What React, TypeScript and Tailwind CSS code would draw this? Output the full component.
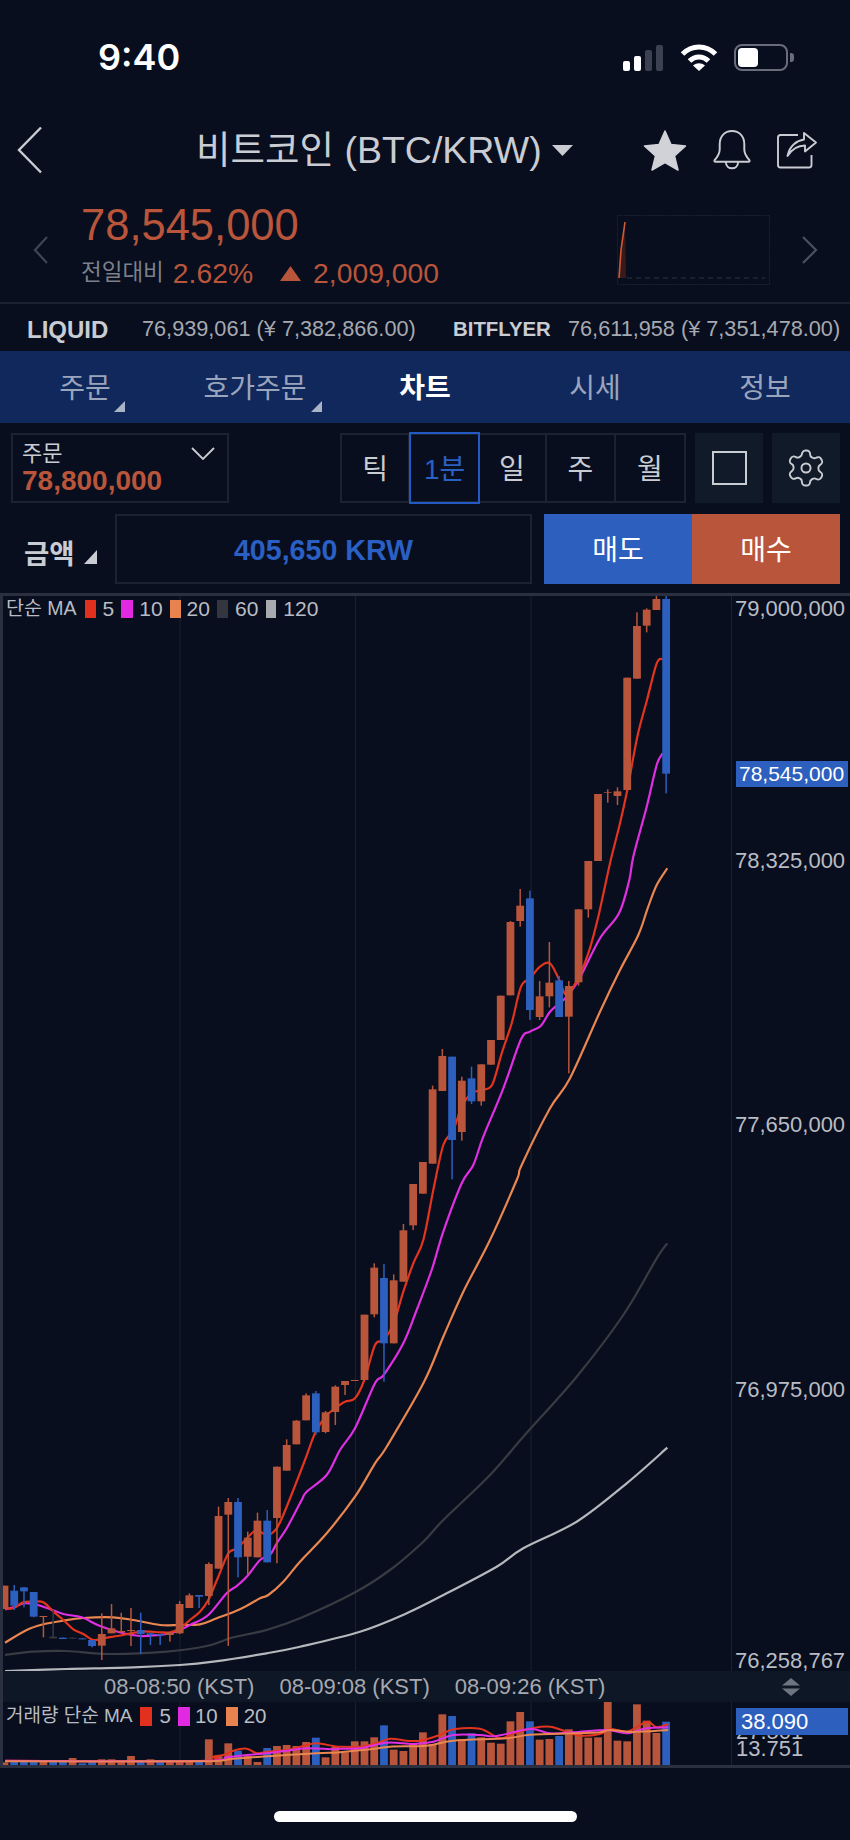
import React from "react";

type Candle = [number, number, number, number, "o" | "b" | "d"];

// candle values are read off the chart: [bodyTop, bodyBottom, wickTop, wickBottom, colour]
const rawA: Candle[] = [
  [617, 687, 617, 687, "o"], [632, 677, 615, 690, "b"], [622, 634, 622, 682, "b"], [636, 710, 636, 712, "b"],
  [708, 711, 708, 772, "o"], [770, 775, 690, 775, "d"], [773, 777, 773, 777, "b"], [773, 776, 773, 776, "d"],
  [775, 778, 775, 778, "b"], [780, 798, 780, 802, "b"], [762, 797, 700, 840, "o"], [745, 760, 672, 760, "o"],
  [753, 757, 698, 757, "o"], [750, 753, 684, 798, "o"], [750, 762, 698, 822, "b"], [760, 765, 760, 795, "b"],
  [762, 766, 762, 795, "b"], [757, 765, 757, 785, "o"], [672, 760, 663, 762, "o"], [646, 684, 640, 684, "o"],
  [645, 650, 645, 684, "b"], [552, 648, 547, 675, "o"], [408, 566, 380, 566, "o"], [366, 404, 354, 798, "o"],
  [366, 532, 354, 592, "b"], [473, 530, 455, 585, "o"], [422, 532, 398, 532, "o"], [422, 547, 390, 547, "b"],
  [260, 414, 260, 550, "o"], [195, 272, 178, 272, "o"], [122, 193, 120, 193, "o"],
];
const rawB: Candle[] = [
  [886, 961, 880, 961, "o"], [880, 997, 873, 1005, "b"], [937, 996, 933, 1000, "o"], [860, 936, 856, 975, "o"],
  [843, 855, 843, 885, "o"], [840, 843, 840, 843, "o"], [644, 840, 644, 840, "o"], [503, 643, 490, 652, "o"],
  [534, 730, 492, 845, "b"], [541, 730, 523, 730, "o"], [391, 545, 372, 545, "o"], [252, 376, 252, 390, "o"],
  [186, 281, 186, 281, "o"],
];
const rawC: Candle[] = [
  [628, 851, 617, 851, "o"], [528, 633, 507, 633, "o"], [530, 780, 530, 898, "b"], [602, 756, 590, 782, "o"],
  [595, 664, 560, 672, "b"], [553, 664, 553, 677, "o"], [480, 554, 480, 554, "o"], [347, 480, 347, 480, "o"],
  [126, 346, 123, 346, "o"], [77, 123, 27, 140, "o"], [55, 390, 32, 420, "b"], [349, 411, 303, 420, "o"],
  [308, 349, 186, 382, "o"], [301, 411, 288, 411, "b"], [318, 410, 303, 580, "o"], [88, 307, 88, 317, "o"],
];
const rawD: Candle[] = [
  [813, 958, 813, 983, "o"], [612, 813, 612, 813, "o"], [606, 608, 598, 638, "o"], [604, 618, 592, 645, "o"],
  [263, 600, 263, 600, "o"], [108, 266, 67, 266, "o"], [59, 107, 55, 127, "o"], [27, 60, 15, 60, "o"],
  [27, 551, 15, 610, "b"],
];

const toPage = (list: Candle[], oy: number): Candle[] =>
  list.map(([a, b, c, d, k]) => [oy + a / 3, oy + b / 3, oy + c / 3, oy + d / 3, k]);

const candles: Candle[] = [
  ...toPage(rawA, 1380),
  ...toPage(rawB, 1100),
  ...toPage(rawC, 880),
  ...toPage(rawD, 590),
];

const candleX = (i: number) => 4.5 + 9.73 * i;

const pts = (ox: number, oy: number, list: number[][]) => list.map(([x, y]) => [ox + x / 3, oy + y / 3]);

// catmull-rom through the read points, the app's lines are smooth
const smooth = (p: number[][]) => {
  let d = `M${p[0][0].toFixed(1)} ${p[0][1].toFixed(1)}`;
  for (let i = 0; i < p.length - 1; i++) {
    const a = p[Math.max(i - 1, 0)];
    const b = p[i];
    const c = p[i + 1];
    const e = p[Math.min(i + 2, p.length - 1)];
    const c1x = b[0] + (c[0] - a[0]) / 6;
    const c1y = b[1] + (c[1] - a[1]) / 6;
    const c2x = c[0] - (e[0] - b[0]) / 6;
    const c2y = c[1] - (e[1] - b[1]) / 6;
    d += ` C${c1x.toFixed(1)} ${c1y.toFixed(1)} ${c2x.toFixed(1)} ${c2y.toFixed(1)} ${c[0].toFixed(1)} ${c[1].toFixed(1)}`;
  }
  return d;
};

const ma5 = smooth([
  ...pts(0, 1380, [[15, 685], [40, 685], [70, 667], [100, 665], [130, 667], [160, 695], [190, 720], [220, 748], [250, 762], [280, 780], [310, 775], [340, 770], [370, 765], [420, 755], [450, 755], [480, 757], [510, 757], [540, 745], [570, 720], [600, 695], [625, 660], [655, 590], [685, 520], [712, 505], [745, 470], [770, 450], [800, 465], [830, 445], [860, 380]]),
  ...pts(240, 1100, [[195, 1080], [225, 1000], [256, 950], [285, 925], [315, 905], [345, 895], [373, 840], [405, 735], [431, 720], [461, 670], [490, 575], [520, 490], [550, 420], [580, 270], [610, 135], [640, 90]]),
  ...pts(420, 880, [[125, 680], [154, 640], [184, 630], [216, 615], [245, 520], [275, 430], [303, 320], [330, 295], [360, 260], [390, 250], [418, 300], [440, 345], [476, 290], [505, 220], [535, 110]]),
  ...pts(540, 590, [[210, 820], [240, 700], [262, 600], [292, 440], [321, 330], [350, 220], [368, 207]]),
]);

const ma10 = smooth([
  ...pts(0, 1380, [[15, 688], [40, 682], [70, 670], [100, 672], [130, 680], [190, 702], [245, 712], [300, 738], [370, 760], [420, 768], [480, 765], [510, 760], [540, 750], [570, 735], [625, 705], [680, 640], [712, 617], [745, 585], [780, 540], [810, 525], [830, 490], [860, 445]]),
  ...pts(240, 1100, [[185, 1200], [200, 1175], [260, 1125], [300, 1050], [345, 985], [405, 850], [431, 825], [490, 730], [530, 630], [575, 510], [610, 395], [665, 250], [700, 195]]),
  ...pts(420, 880, [[190, 770], [250, 625], [303, 478], [330, 455], [362, 438], [390, 395], [418, 370], [440, 350], [476, 300], [540, 175], [597, 100], [628, 0]]),
  ...pts(540, 590, [[280, 800], [320, 650], [350, 525], [368, 490]]),
]);

const ma20 = smooth([
  ...pts(0, 1380, [[15, 788], [80, 750], [130, 733], [190, 722], [250, 714], [340, 712], [400, 720], [480, 735], [540, 735], [600, 733], [650, 715], [720, 688], [780, 655], [805, 645], [850, 605]]),
  ...pts(300, 1230, [[0, 995], [80, 910], [165, 800]]),
  ...pts(240, 1100, [[405, 1090], [440, 1040], [550, 850], [610, 710], [670, 575], [750, 420]]),
  ...pts(420, 880, [[290, 900], [305, 855], [390, 685], [450, 595], [540, 395], [600, 270], [655, 165]]),
  ...pts(540, 590, [[322, 958], [350, 885], [382, 835]]),
]);

const ma60 = smooth([
  ...pts(0, 1380, [[15, 825], [100, 815], [200, 813], [330, 822], [500, 815], [620, 798], [700, 772], [800, 750]]),
  ...pts(300, 1230, [[0, 1165], [160, 1090], [270, 1020], [370, 935], [430, 870], [570, 735], [670, 620], [830, 440], [970, 255], [1070, 85], [1102, 40]]),
]);

const ma120 = smooth([
  ...pts(0, 1380, [[15, 873], [200, 867], [400, 862], [540, 855], [640, 845], [800, 820]]),
  ...pts(300, 1230, [[0, 1250], [180, 1205], [320, 1150], [440, 1090], [590, 1010], [670, 955], [830, 875], [980, 760], [1102, 653]]),
]);

// volume bars: top of each bar as read from the two crops
const volTops: [number, "o" | "b"][] = [
  [187, "o"], [183, "b"], [183, "b"], [183, "b"], [186, "o"], [185, "b"], [184, "b"], [174, "o"], [190, "b"], [185, "b"],
  [178, "o"], [178, "o"], [182, "o"], [168, "o"], [180, "b"], [178, "o"], [184, "b"], [183, "o"], [184, "o"], [184, "o"],
  [183, "b"], [118, "o"], [166, "o"], [130, "o"], [152, "b"], [168, "o"], [186, "o"], [144, "b"], [138, "o"], [135, "o"],
  [138, "o"], [126, "o"], [113, "b"], [172, "o"], [140, "o"], [157, "o"], [124, "o"], [124, "o"], [112, "o"], [76, "b"],
  [149, "o"], [153, "o"], [130, "o"], [97, "o"], [132, "o"], [43, "o"], [48, "b"], [118, "o"], [100, "b"], [112, "o"],
  [128, "o"], [131, "o"], [64, "o"], [36, "o"], [64, "b"], [119, "o"], [117, "o"], [108, "b"], [88, "o"], [100, "o"],
  [113, "o"], [112, "o"], [5, "o"], [122, "o"], [124, "o"], [13, "o"], [62, "o"], [99, "o"], [65, "b"],
];

const vol5 = smooth([
  ...pts(0, 1700, [[15, 182], [600, 183], [640, 170], [670, 165], [700, 152], [740, 146], [770, 160], [800, 155], [860, 150], [920, 135], [950, 130], [1000, 138]]),
  ...pts(340, 1700, [[0, 140], [60, 140], [110, 130], [150, 116], [200, 122], [240, 122], [300, 105], [340, 88], [420, 86], [480, 115], [520, 100], [580, 84], [630, 80], [680, 95], [720, 107], [780, 102], [810, 87], [860, 95], [900, 75], [925, 65], [950, 82], [985, 72]]),
]);
const vol10 = smooth([
  ...pts(0, 1700, [[15, 182], [600, 183], [680, 172], [740, 165], [800, 160], [860, 152], [920, 145], [1000, 148]]),
  ...pts(340, 1700, [[0, 146], [60, 145], [140, 128], [220, 132], [280, 125], [340, 105], [420, 105], [470, 108], [570, 87], [630, 100], [700, 97], [800, 90], [860, 100], [920, 85], [985, 82]]),
]);
const vol20 = smooth([
  ...pts(0, 1700, [[15, 184], [600, 184], [700, 176], [860, 165], [1000, 158]]),
  ...pts(340, 1700, [[0, 157], [100, 147], [150, 140], [260, 137], [340, 122], [500, 115], [570, 104], [700, 100], [780, 97], [810, 90], [880, 96], [985, 90]]),
]);

const ORANGE = "#b9553b";
const BLUE = "#2c5fbe";

const gridXs = [180, 355.5, 531];

function Corner() {
  return (
    <svg width="11" height="11" viewBox="0 0 11 11" className="absolute top-[50px] left-[114px]">
      <polygon points="11,0 11,11 0,11" fill="#a9b3c8" />
    </svg>
  );
}

function PriceChart() {
  return (
    <svg width="728" height="1075" viewBox="3 596 728 1075" className="block">
      {gridXs.map((x) => (
        <line key={x} x1={x} x2={x} y1={596} y2={1671} stroke="#18212f" strokeWidth="1" />
      ))}
      <path d={ma120} fill="none" stroke="#b5b8bd" strokeWidth="2.2" />
      <path d={ma60} fill="none" stroke="#383b42" strokeWidth="2.2" />
      <path d={ma20} fill="none" stroke="#ea8650" strokeWidth="2.2" />
      <path d={ma10} fill="none" stroke="#e02fe2" strokeWidth="2.2" />
      <path d={ma5} fill="none" stroke="#e2341f" strokeWidth="2.2" />
      {candles.map(([top, bottom, wickTop, wickBottom, kind], i) => {
        const x = candleX(i);
        const color = kind === "o" ? ORANGE : kind === "b" ? BLUE : "#333945";
        return (
          <g key={i}>
            <rect x={x - 0.75} y={wickTop} width="1.5" height={wickBottom - wickTop} fill={color} />
            <rect x={x - 3.9} y={top} width="7.8" height={bottom - top} fill={color} />
          </g>
        );
      })}
    </svg>
  );
}

function VolumeChart() {
  return (
    <svg width="728" height="63" viewBox="3 1702 728 63" className="block">
      {gridXs.map((x) => (
        <line key={x} x1={x} x2={x} y1={1702} y2={1765} stroke="#18212f" strokeWidth="1" />
      ))}
      {volTops.map(([top, kind], i) => (
        <rect
          key={i}
          x={candleX(i) - 3.9}
          y={1700 + top / 3}
          width="7.8"
          height={1765 - (1700 + top / 3)}
          fill={kind === "o" ? ORANGE : BLUE}
        />
      ))}
      <path d={vol5} fill="none" stroke="#e2341f" strokeWidth="2" />
      <path d={vol10} fill="none" stroke="#e02fe2" strokeWidth="2" />
      <path d={vol20} fill="none" stroke="#ea8650" strokeWidth="2" />
    </svg>
  );
}

export default function App() {
  return (
    <div className="w-[850px] h-[1840px] overflow-hidden bg-[#080e1d] [font-family:'Liberation_Sans','Noto_Sans_CJK_KR',sans-serif] flex flex-col">
      {/* Status bar */}
      <div className="h-[114px] shrink-0 flex items-center pl-[98px] pr-[56px]">
        <span className="text-[36px] font-semibold text-white [font-family:Inter,sans-serif]">9:40</span>
        <div className="ml-auto flex items-center">
          <div className="flex items-end gap-[3.5px] h-[27px]">
            <div className="w-[7.5px] h-[10px] rounded-[2px] bg-white" />
            <div className="w-[7.5px] h-[15px] rounded-[2px] bg-white" />
            <div className="w-[7.5px] h-[21px] rounded-[2px] bg-[#3b4150]" />
            <div className="w-[7.5px] h-[26px] rounded-[2px] bg-[#3b4150]" />
          </div>
          <svg width="38" height="28" viewBox="0 0 38 28" className="ml-[17px]">
            <path d="M2.5 11 C12 1.5 26 1.5 35.5 11" fill="none" stroke="white" strokeWidth="5" />
            <path d="M9.5 18 C15 12.5 23 12.5 28.5 18" fill="none" stroke="white" strokeWidth="5" />
            <path d="M13 22.5 C17 19.5 21 19.5 25 22.5 L19 28 Z" fill="white" />
          </svg>
          <div className="ml-[16px] w-[54px] h-[27px] rounded-[8px] border-2 border-[#686d79] p-[2px]">
            <div className="w-[20px] h-full rounded-[4px] bg-white" />
          </div>
          <div className="ml-[2px] w-[4px] h-[9px] rounded-r-[3px] bg-[#686d79]" />
        </div>
      </div>

      {/* Title */}
      <div className="h-[72px] shrink-0 flex items-center relative">
        <svg width="26" height="48" viewBox="0 0 26 48" className="ml-[17px]">
          <path d="M24 1.5 L2 24 L24 46.5" fill="none" stroke="#c9ccd2" strokeWidth="2.4" />
        </svg>
        <span className="ml-[153px] text-[37.5px] text-[#c9ccd2] whitespace-nowrap">비트코인 (BTC/KRW)</span>
        <svg width="21" height="11" viewBox="0 0 21 11" className="ml-[10px]">
          <polygon points="0,0 21,0 10.5,11" fill="#c9ccd2" />
        </svg>
        <svg width="44" height="41" viewBox="0 0 44 41" className="ml-[70px]">
          <path
            d="M22 1 L28 14.5 L42.5 16 L31.5 26 L35 40 L22 32.5 L9 40 L12.5 26 L1.5 16 L16 14.5 Z"
            fill="#d0d2d8"
            stroke="#d0d2d8"
            strokeWidth="1.5"
            strokeLinejoin="round"
          />
        </svg>
        <svg width="40" height="41" viewBox="0 0 38 40" className="ml-[25px]" fill="none" stroke="#c9ccd2" strokeWidth="1.9">
          <path d="M2 29.5 C5 26 7 23 7 19 V14 C7 6 12 1 19 1 C26 1 31 6 31 14 V19 C31 23 33 26 36 29.5 C36.5 30.5 36 31 35 31 H3 C2 31 1.5 30.5 2 29.5 Z" />
          <path d="M13 31 C13 39.5 25 39.5 25 31" />
        </svg>
        <svg width="41" height="38" viewBox="0 0 41 38" className="ml-[25px]" fill="none" stroke="#c9ccd2" strokeWidth="1.9">
          <path d="M21 4 H3.5 Q1 4 1 6.5 V34 Q1 36.5 3.5 36.5 H32 Q34.5 36.5 34.5 34 V24" />
          <path d="M10.5 25 C12.5 14.5 20 9.5 27 8.5 V2 L39 11.5 L28 20.5 V14.5 C20 14.5 15 18 10.5 25 Z" strokeLinejoin="round" />
        </svg>
      </div>

      {/* Price */}
      <div className="h-[116px] shrink-0 flex items-start pl-[33px] pr-[32px] pt-[16px]">
        <svg width="15" height="28" viewBox="0 0 15 28" className="mt-[34px] shrink-0">
          <path d="M14 1 L2 14 L14 27" fill="none" stroke="#3f4552" strokeWidth="2.2" />
        </svg>
        <div className="ml-[33px] flex-1 flex flex-col">
          <span className="h-[46px] leading-[46px] text-[43.5px] text-[#b9553b]">78,545,000</span>
          <div className="mt-[2px] h-[46px] flex items-center whitespace-nowrap">
            <span className="text-[22.5px] text-[#7c808a]">전일대비</span>
            <span className="ml-[9px] text-[28.3px] text-[#b9553b]">2.62%</span>
            <svg width="21" height="15" viewBox="0 0 21 15" className="ml-[27px]">
              <polygon points="10.5,0 21,15 0,15" fill="#b9553b" />
            </svg>
            <span className="ml-[12px] text-[28.3px] text-[#b9553b]">2,009,000</span>
          </div>
        </div>
        <svg width="153" height="70" viewBox="618 215 153 70" className="mt-[13px] shrink-0">
          <rect x="618.5" y="215.5" width="152" height="69" fill="none" stroke="#1a2231" strokeDasharray="2 1" />
          <polygon points="620,278 622,250 626,222 627,278" fill="#3a1a18" />
          <line x1="628" x2="766" y1="278" y2="278" stroke="#1f2735" strokeWidth="1.5" strokeDasharray="5 4" />
          <polyline points="620,278 622,250 626,222" fill="none" stroke="#d05a35" strokeWidth="1.6" />
        </svg>
        <svg width="16" height="28" viewBox="0 0 16 28" className="ml-[32px] mt-[34px] shrink-0">
          <path d="M1 1 L14 14 L1 27" fill="none" stroke="#4a505d" strokeWidth="2.2" />
        </svg>
      </div>

      <div className="h-[2px] shrink-0 bg-[#1a2130]" />

      {/* Other exchanges */}
      <div className="h-[47px] shrink-0 flex items-center whitespace-nowrap pl-[27px] pt-[4px]">
        <span className="w-[115px] text-[24px] font-bold text-[#c9ccd2]">LIQUID</span>
        <span className="w-[311px] text-[21.7px] text-[#a6a9b0]">76,939,061 (¥ 7,382,866.00)</span>
        <span className="w-[115px] text-[20.4px] font-bold text-[#c9ccd2]">BITFLYER</span>
        <span className="text-[21.7px] text-[#a6a9b0]">76,611,958 (¥ 7,351,478.00)</span>
      </div>

      {/* Tabs */}
      <div className="h-[72px] shrink-0 grid grid-cols-5 bg-[#10285c] text-[28px] text-[#9aa5bd]">
        <div className="relative flex items-center justify-center pt-[4px]">
          주문
          <Corner />
        </div>
        <div className="relative flex items-center justify-center pt-[4px]">
          호가주문
          <svg width="11" height="11" viewBox="0 0 11 11" className="absolute top-[50px] left-[141px]">
            <polygon points="11,0 11,11 0,11" fill="#a9b3c8" />
          </svg>
        </div>
        <div className="flex items-center justify-center pt-[4px] font-bold text-white">차트</div>
        <div className="flex items-center justify-center pt-[4px]">시세</div>
        <div className="flex items-center justify-center pt-[4px]">정보</div>
      </div>

      {/* Order / interval controls */}
      <div className="mt-[10px] h-[70px] shrink-0 flex pl-[11px] pr-[10px]">
        <div className="w-[218px] border-2 border-[#1b2230] flex items-start pl-[9px] pr-[12px]">
          <div className="flex flex-col">
            <span className="mt-[7px] text-[22px] leading-[24px] text-[#c9ccd2]">주문</span>
            <span className="text-[28px] leading-[30px] font-bold text-[#b9553b]">78,800,000</span>
          </div>
          <svg width="24" height="13" viewBox="0 0 24 13" className="ml-auto mt-[12px]">
            <path d="M1 1 L12 12 L23 1" fill="none" stroke="#c9ccd2" strokeWidth="1.8" />
          </svg>
        </div>
        <div className="ml-[111px] w-[346px] grid grid-cols-5 border-2 border-[#1b2230] text-[28px] text-[#c9ccd2]">
          <div className="flex items-center justify-center pt-[4px] border-r-2 border-[#1b2230]">틱</div>
          <div className="flex items-center justify-center pt-[4px] -my-[2px] outline-2 -outline-offset-1 outline-[#2459c4] text-[#2a5fc4]">1분</div>
          <div className="flex items-center justify-center pt-[4px] border-r-2 border-[#1b2230]">일</div>
          <div className="flex items-center justify-center pt-[4px] border-r-2 border-[#1b2230]">주</div>
          <div className="flex items-center justify-center pt-[4px]">월</div>
        </div>
        <div className="ml-[9px] w-[68px] bg-[#111a28] flex items-center justify-center">
          <div className="w-[35px] h-[34px] border-2 border-[#c9ccd2]" />
        </div>
        <div className="ml-[9px] w-[68px] bg-[#111a28] flex items-center justify-center">
          <svg width="42" height="42" viewBox="0 0 24 24" fill="none" stroke="#c9ccd2" strokeWidth="1.1" strokeLinejoin="round">
            <path d="M9.67 4.14a2 2 0 0 1 .34-1.1A2 2 0 0 1 11.67 2h.66a2 2 0 0 1 2 2v.18a2 2 0 0 0 1 1.73l.43.25a2 2 0 0 0 2 0l.15-.08a2 2 0 0 1 2.73.73l.33.57a2 2 0 0 1-.73 2.73l-.15.1a2 2 0 0 0-1 1.72v.51a2 2 0 0 0 1 1.74l.15.09a2 2 0 0 1 .73 2.73l-.33.57a2 2 0 0 1-2.73.73l-.15-.08a2 2 0 0 0-2 0l-.43.25a2 2 0 0 0-1 1.73V20a2 2 0 0 1-2 2h-.66a2 2 0 0 1-2-2v-.18a2 2 0 0 0-1-1.73l-.43-.25a2 2 0 0 0-2 0l-.15.08a2 2 0 0 1-2.73-.73l-.33-.57a2 2 0 0 1 .73-2.73l.15-.09a2 2 0 0 0 1-1.74v-.51a2 2 0 0 0-1-1.72l-.15-.1a2 2 0 0 1-.73-2.73l.33-.57a2 2 0 0 1 2.73-.73l.15.08a2 2 0 0 0 2 0l.43-.25a2 2 0 0 0 1-1.73Z" />
            <circle cx="12" cy="12" r="2.6" />
          </svg>
        </div>
      </div>

      {/* Amount row */}
      <div className="mt-[11px] h-[70px] shrink-0 flex items-stretch pl-[24px] pr-[10px]">
        <div className="w-[91px] flex items-center relative">
          <span className="mt-[12px] text-[27.5px] font-bold text-[#c9ccd2]">금액</span>
          <svg width="13" height="14" viewBox="0 0 13 14" className="ml-[9px] mt-[16px]">
            <polygon points="13,0 13,14 0,14" fill="#c9ccd2" />
          </svg>
        </div>
        <div className="w-[417px] border-2 border-[#1b2230] flex items-center justify-center pt-[3px] text-[28.6px] font-bold text-[#2a5fc4]">
          405,650 KRW
        </div>
        <div className="ml-[12px] w-[148px] bg-[#2c5fbe] flex items-center justify-center pt-[4px] text-[28px] text-white">매도</div>
        <div className="w-[148px] bg-[#b9553b] flex items-center justify-center pt-[4px] text-[28px] text-white">매수</div>
      </div>

      {/* Chart */}
      <div className="mt-[9px] shrink-0 border-y-[3px] border-l-[3px] border-[#2a3040] flex flex-col">
        <div className="flex h-[1075px]">
          <div className="relative w-[728px]">
            <PriceChart />
            <div className="absolute left-[3px] top-0 h-[26px] flex items-center text-[19.5px] text-[#b9bcc4] whitespace-nowrap">
              <span>단순 MA</span>
              <div className="ml-[8px] w-[11px] h-[18px] bg-[#e2301f]" />
              <span className="ml-[7px] text-[21px]">5</span>
              <div className="ml-[7px] w-[12px] h-[18px] bg-[#e029e0]" />
              <span className="ml-[6px] text-[21px]">10</span>
              <div className="ml-[7px] w-[11px] h-[18px] bg-[#e8834f]" />
              <span className="ml-[6px] text-[21px]">20</span>
              <div className="ml-[7px] w-[11px] h-[18px] bg-[#33363e]" />
              <span className="ml-[7px] text-[21px]">60</span>
              <div className="ml-[8px] w-[10px] h-[18px] bg-[#a8aaad]" />
              <span className="ml-[7px] text-[21px]">120</span>
            </div>
          </div>
          <div className="relative flex-1 border-l border-[#1a2231] text-[22px] leading-[24px] text-[#b9bcc4]">
            <span className="absolute left-[3px] top-px">79,000,000</span>
            <span className="absolute left-[4px] top-[165px] w-[112px] h-[26px] pl-[3px] text-[21px] leading-[26px] bg-[#2c5fbe] text-white">78,545,000</span>
            <span className="absolute left-[3px] top-[253px]">78,325,000</span>
            <span className="absolute left-[3px] top-[517px]">77,650,000</span>
            <span className="absolute left-[3px] top-[782px]">76,975,000</span>
            <span className="absolute left-[3px] top-[1053px]">76,258,767</span>
          </div>
        </div>

        <div className="h-[31px] bg-[#0e1726] flex items-center whitespace-nowrap text-[22px] text-[#a6a9b0] pl-[101px]">
          <span>08-08:50 (KST)</span>
          <span className="ml-[25px]">08-09:08 (KST)</span>
          <span className="ml-[25px]">08-09:26 (KST)</span>
          <svg width="18" height="18" viewBox="0 0 18 18" className="ml-[177px]">
            <polygon points="9,0 18,7.5 0,7.5" fill="#6e7480" />
            <polygon points="0,10.5 18,10.5 9,18" fill="#6e7480" />
          </svg>
        </div>

        <div className="flex h-[63px]">
          <div className="relative w-[728px]">
            <VolumeChart />
            <div className="absolute left-[3px] top-[5px] h-[19px] flex items-center text-[19px] text-[#b9bcc4] whitespace-nowrap">
              <span>거래량 단순 MA</span>
              <div className="ml-[8px] w-[12px] h-[19px] bg-[#e2301f]" />
              <span className="ml-[7px] text-[20.5px]">5</span>
              <div className="ml-[7px] w-[12px] h-[19px] bg-[#e029e0]" />
              <span className="ml-[5px] text-[20.5px]">10</span>
              <div className="ml-[8px] w-[12px] h-[19px] bg-[#e8834f]" />
              <span className="ml-[6px] text-[20.5px]">20</span>
            </div>
          </div>
          <div className="relative flex-1 border-l border-[#1a2231] text-[22px] leading-[16px] text-[#b9bcc4]">
            <span className="absolute left-[4px] top-[22px]">27.501</span>
            <span className="absolute left-[4px] top-[39px]">13.751</span>
            <span className="absolute left-[4px] top-[6px] w-[112px] h-[27px] pl-[5px] leading-[27px] bg-[#2c5fbe] text-white">38.090</span>
          </div>
        </div>
      </div>

      {/* Home indicator */}
      <div className="mt-[43px] mx-auto w-[303px] h-[11px] shrink-0 rounded-full bg-white" />
    </div>
  );
}
